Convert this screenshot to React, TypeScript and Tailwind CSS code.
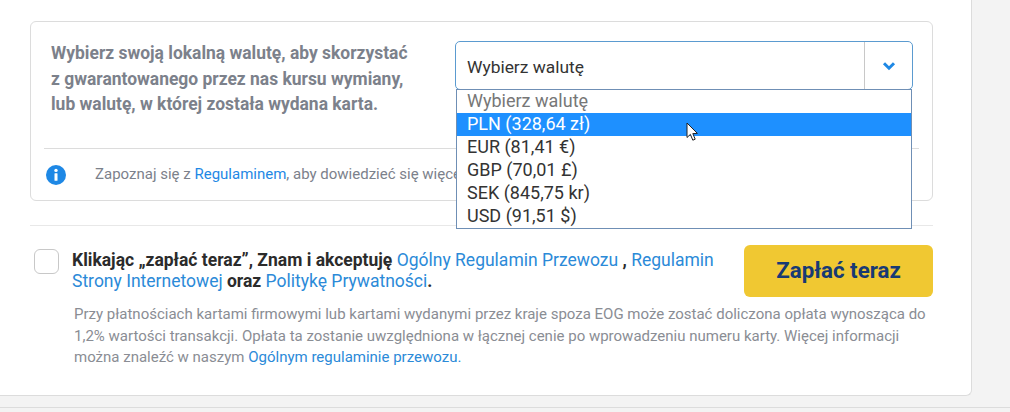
const options = ['PLN (328,64 zł)', 'EUR (81,41 €)', 'GBP (70,01 £)', 'SEK (845,75 kr)', 'USD (91,51 $)']

function InfoIcon() {
  return (
    <svg width="20" height="20" viewBox="0 0 20 20" className="shrink-0">
      <circle cx="10" cy="10" r="10" fill="#1e88e5" />
      <circle cx="10" cy="5.4" r="1.7" fill="#fff" />
      <rect x="8.5" y="8.2" width="3" height="7.6" rx="0.5" fill="#fff" />
    </svg>
  )
}

function Chevron() {
  return (
    <svg width="14" height="10" viewBox="0 0 14 10">
      <path d="M2 2.2 L7 7.2 L12 2.2" fill="none" stroke="#1e88e5" strokeWidth="3" />
    </svg>
  )
}

function Cursor() {
  return (
    <svg width="13" height="20" viewBox="0 0 13 20" className="absolute left-[229px] top-[9px]">
      <path d="M1 1 L1 15.5 L4.4 12.4 L6.8 18.2 L9.2 17.2 L6.8 11.6 L11.4 11.4 Z" fill="#fff" stroke="#222" strokeWidth="1" />
    </svg>
  )
}

export default function App() {
  return (
    <div className="h-[412px] w-[1010px] overflow-hidden bg-[#f3f3f3] font-['Roboto',sans-serif]">
      <div className="h-[408px] border-b border-[#dcdcdc]">
        <div className="h-[396px] w-[972px] rounded-br-md border-r border-b border-[#dcdcdc] bg-white pt-[21px] pl-[30px] pr-[38px]">
          <div className="h-[180px] w-[903px] rounded-md border border-[#dcdcdc]">
            <div className="flex h-[126px] pt-[19px] pl-5 pr-[19px]">
              <p className="w-[404px] text-[17.45px] leading-[25.5px] font-bold text-[#7c818b]">
                Wybierz swoją lokalną walutę, aby skorzystać
                <br />z gwarantowanego przez nas kursu wymiany,
                <br />lub walutę, w której została wydana karta.
              </p>
              <div className="relative h-[49px] w-[458px]">
                <div className="flex h-[49px] items-stretch rounded-[5px] border border-[#5b9bd0] bg-white">
                  <span className="flex-1 pl-[11px] pt-[13px] text-[17.4px] leading-[24px] text-[#333]">Wybierz walutę</span>
                  <span className="flex w-[48px] items-center justify-center border-l border-[#c8c8c8]">
                    <Chevron />
                  </span>
                </div>
                <ul className="absolute top-[48px] left-px z-10 w-[456px] border border-[#6f8fb5] bg-white text-[18px] leading-[22px] text-[#333]">
                  <li className="h-[23px] pl-[10px] text-[#777]">Wybierz walutę</li>
                  {options.map((o, i) => (
                    <li key={o} className={i === 0 ? 'relative h-[23px] bg-[#1e90ff] pl-[10px] text-white' : 'h-[23px] pl-[10px]'}>
                      {o}
                      {i === 0 && <Cursor />}
                    </li>
                  ))}
                </ul>
              </div>
            </div>
            <div className="mx-[13px] flex h-[52px] items-center border-t border-[#dcdcdc] pl-[2px]">
              <InfoIcon />
              <p className="ml-[29px] whitespace-nowrap text-[15px] text-[#7c818b]">
                Zapoznaj się z <a className="text-[#1e88e5]">Regulaminem</a>, aby dowiedzieć się więcej
              </p>
            </div>
          </div>

          <div className="mt-6 w-[903px] border-t border-[#e8e8e8] pt-[19px]">
            <div className="flex">
              <span className="mt-[4px] ml-1 h-[25px] w-[25px] shrink-0 rounded-md border border-[#c8c8c8] bg-white" />
              <p className="ml-[13px] w-[650px] pt-[5px] text-[17.5px] leading-[21px] font-bold text-[#2b2b2b]">
                Klikając „zapłać teraz”, Znam i akceptuję{' '}
                <a className="font-normal text-[#2b8ad8]">Ogólny Regulamin Przewozu</a> ,{' '}
                <a className="font-normal text-[#2b8ad8]">Regulamin Strony Internetowej</a> oraz{' '}
                <a className="font-normal text-[#2b8ad8]">Politykę Prywatności</a>.
              </p>
              <button className="ml-auto h-[52px] w-[189px] rounded-md bg-[#f0c832] text-[22.3px] font-bold text-[#173a74]">
                Zapłać teraz
              </button>
            </div>
            <p className="mt-[7px] ml-11 w-[860px] text-[15px] leading-[21.5px] text-[#8a8d94]">
              Przy płatnościach kartami firmowymi lub kartami wydanymi przez kraje spoza EOG może zostać doliczona opłata wynosząca do 1,2% wartości transakcji. Opłata ta zostanie uwzględniona w łącznej cenie po wprowadzeniu numeru karty. Więcej informacji można znaleźć w naszym{' '}
              <a className="text-[#2b8ad8]">Ogólnym regulaminie przewozu.</a>
            </p>
          </div>
        </div>
      </div>
    </div>
  )
}
